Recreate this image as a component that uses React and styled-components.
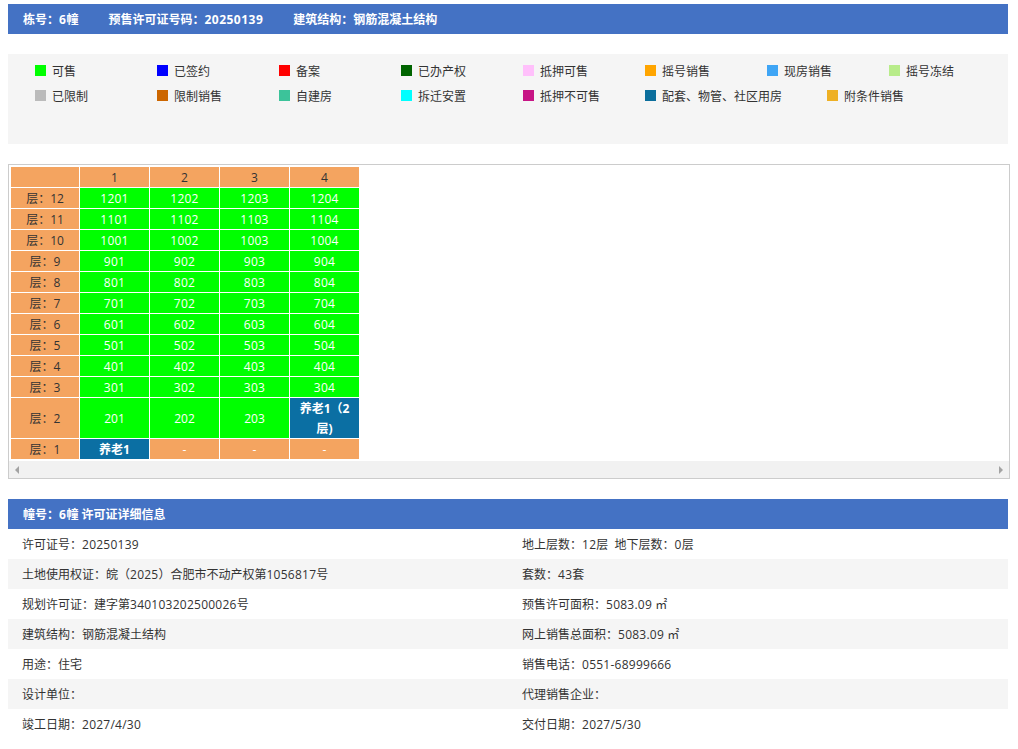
import React from "react";
import styled, { createGlobalStyle } from "styled-components";

const GlobalStyle = createGlobalStyle`
  html, body { margin: 0; padding: 0; background: #fff; }
  body {
    font-family: "Open Sans", "Noto Sans CJK SC", "Liberation Sans", sans-serif;
    font-size: 12px;
    color: #333;
  }
`;

const Page = styled.div`
  width: 1000px;
  margin: 0 8px;
  padding-top: 4px;
  display: flex;
  flex-direction: column;
  gap: 20px;
`;

const Num = styled.span`
  letter-spacing: 0.25px;
`;

const TitleBar = styled.div`
  height: 30px;
  background: #4472c4;
  color: #fff;
  font-weight: 700;
  padding-left: 15px;
  display: flex;
  align-items: center;
  gap: 30px;

  ${Num} {
    letter-spacing: 0.5px;
  }
`;

const LegendPanel = styled.div`
  height: 90px;
  box-sizing: border-box;
  padding: 4px 0 0 27px;
  background: #f5f5f5;
`;

const LegendList = styled.ul`
  list-style: none;
  margin: 0 -10px 0 0;
  padding: 0;
  display: flex;
  flex-wrap: wrap;
`;

const LegendItem = styled.li`
  display: flex;
  align-items: center;
  min-width: 122px;
  height: 25px;
  box-sizing: border-box;
  padding-right: ${(p) => (p.$wide ? "45px" : "0")};
`;

const Swatch = styled.span`
  width: 11px;
  height: 11px;
  margin-right: 6px;
  background: ${(p) => p.$color};
`;

const TableBox = styled.div`
  width: 1002px;
  box-sizing: border-box;
  border: 1px solid #ccc;
`;

const TablePad = styled.div`
  padding: 1px;
`;

const Grid = styled.table`
  border-collapse: separate;
  border-spacing: 1px;
  table-layout: fixed;
  width: 349px;
`;

const Cell = styled.td`
  width: ${(p) => (p.$first ? "68px" : "69px")};
  box-sizing: border-box;
  padding: ${(p) => (p.$wrap ? "1px 4px 0" : "2px 4px 0")};
  line-height: ${(p) => (p.$wrap ? "19.5px" : "18px")};
  text-align: center;
  background: ${(p) => ({ head: "#f4a460", sale: "#00ff00", care: "#0b6fa3" }[p.$kind])};
  color: ${(p) => (p.$kind === "sale" || p.$kind === "care" || p.$light ? "#fff" : "#333")};
  font-weight: ${(p) => (p.$kind === "care" ? 700 : 400)};
`;

const Scrollbar = styled.div`
  height: 17px;
  background: #f1f1f1;
  display: flex;
  align-items: center;
  justify-content: space-between;
  padding: 0 6px;
`;

const Arrow = styled.span`
  width: 0;
  height: 0;
  border-top: 4px solid transparent;
  border-bottom: 4px solid transparent;
  ${(p) => (p.$right ? "border-left: 4px solid #a3a3a3;" : "border-right: 4px solid #a3a3a3;")}
`;

const Details = styled.section`
  display: flex;
  flex-direction: column;
`;

const DetailRow = styled.div`
  height: 30px;
  display: grid;
  grid-template-columns: 500px 500px;
  align-items: center;
  background: ${(p) => (p.$shaded ? "#f5f5f5" : "#fff")};
`;

const DetailCell = styled.div`
  padding-left: 14px;
  white-space: pre;
`;

const legend = [
  ["可售", "#00ff00"],
  ["已签约", "#0000ff"],
  ["备案", "#ff0000"],
  ["已办产权", "#006400"],
  ["抵押可售", "#ffc0fb"],
  ["摇号销售", "#ffa500"],
  ["现房销售", "#3fa5f5"],
  ["摇号冻结", "#b8ec8a"],
  ["已限制", "#bbbbbb"],
  ["限制销售", "#cc6600"],
  ["自建房", "#3cc39a"],
  ["拆迁安置", "#00ffff"],
  ["抵押不可售", "#c71585"],
  ["配套、物管、社区用房", "#0b6e9c", true],
  ["附条件销售", "#eeb024"],
];

const floors = [12, 11, 10, 9, 8, 7, 6, 5, 4, 3];

const details = [
  ["许可证号：20250139", "地上层数：12层  地下层数：0层"],
  ["土地使用权证：皖（2025）合肥市不动产权第1056817号", "套数：43套"],
  ["规划许可证：建字第340103202500026号", "预售许可面积：5083.09 ㎡"],
  ["建筑结构：钢筋混凝土结构", "网上销售总面积：5083.09 ㎡"],
  ["用途：住宅", "销售电话：0551-68999666"],
  ["设计单位：", "代理销售企业："],
  ["竣工日期：2027/4/30", "交付日期：2027/5/30"],
];

// Digits in the reference run slightly wider than the fallback font's.
const Mixed = ({ text }) =>
  String(text)
    .split(/(\d[\d./-]*)/)
    .map((part, i) => (i % 2 ? <Num key={i}>{part}</Num> : part));

export default function App() {
  return (
    <>
      <GlobalStyle />
      <Page>
        <TitleBar>
          <span><Mixed text="栋号：6幢" /></span>
          <span><Mixed text="预售许可证号码：20250139" /></span>
          <span>建筑结构：钢筋混凝土结构</span>
        </TitleBar>

        <LegendPanel>
          <LegendList>
            {legend.map(([label, color, wide]) => (
              <LegendItem key={label} $wide={wide}>
                <Swatch $color={color} />
                {label}
              </LegendItem>
            ))}
          </LegendList>
        </LegendPanel>

        <TableBox>
          <TablePad>
            <Grid>
              <tbody>
                <tr>
                  <Cell $kind="head" $first />
                  {[1, 2, 3, 4].map((n) => (
                    <Cell $kind="head" key={n}>{n}</Cell>
                  ))}
                </tr>
                {floors.map((f) => (
                  <tr key={f}>
                    <Cell $kind="head" $first>层：{f}</Cell>
                    {[1, 2, 3, 4].map((n) => (
                      <Cell $kind="sale" key={n}><Num>{f * 100 + n}</Num></Cell>
                    ))}
                  </tr>
                ))}
                <tr>
                  <Cell $kind="head" $first>层：2</Cell>
                  <Cell $kind="sale">201</Cell>
                  <Cell $kind="sale">202</Cell>
                  <Cell $kind="sale">203</Cell>
                  <Cell $kind="care" $wrap>养老1（2层)</Cell>
                </tr>
                <tr>
                  <Cell $kind="head" $first>层：1</Cell>
                  <Cell $kind="care">养老1</Cell>
                  <Cell $kind="head" $light>-</Cell>
                  <Cell $kind="head" $light>-</Cell>
                  <Cell $kind="head" $light>-</Cell>
                </tr>
              </tbody>
            </Grid>
          </TablePad>
          <Scrollbar>
            <Arrow />
            <Arrow $right />
          </Scrollbar>
        </TableBox>

        <Details>
          <TitleBar>
            <span><Mixed text="幢号：6幢 许可证详细信息" /></span>
          </TitleBar>
          {details.map(([left, right], i) => (
            <DetailRow key={left} $shaded={i % 2 === 1}>
              <DetailCell><Mixed text={left} /></DetailCell>
              <DetailCell><Mixed text={right} /></DetailCell>
            </DetailRow>
          ))}
        </Details>
      </Page>
    </>
  );
}
